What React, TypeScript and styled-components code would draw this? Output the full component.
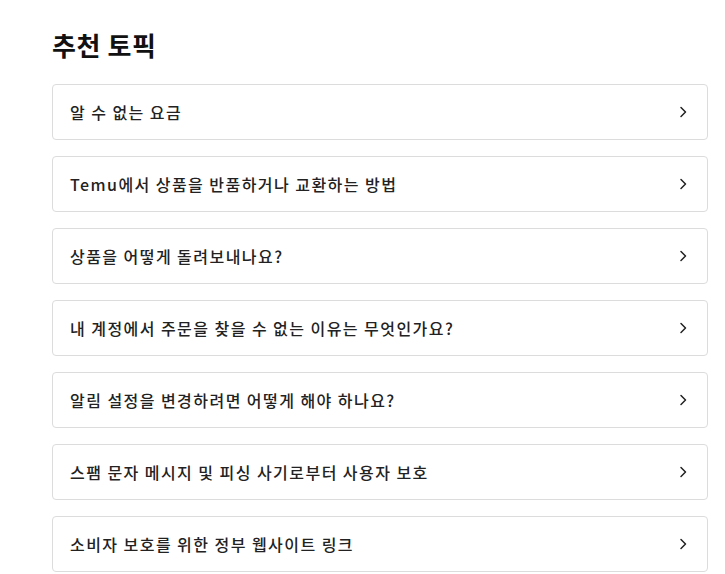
import React from "react";
import styled, { createGlobalStyle } from "styled-components";

const Global = createGlobalStyle`
  html, body { margin: 0; padding: 0; background: #fff; }
  body { font-family: "Noto Sans CJK KR", "Noto Sans", sans-serif; color: #222; }
`;

const Page = styled.div`
  padding: 26px 0 0 52px;
  width: 656px;
`;

const Title = styled.h2`
  margin: 0 0 20px;
  font-size: 26px;
  font-weight: 700;
  line-height: 38px;
  color: #111;
  letter-spacing: 0.6px;
`;

const List = styled.div`
  display: flex;
  flex-direction: column;
  gap: 16px;
`;

const Item = styled.div`
  box-sizing: border-box;
  height: 56px;
  border: 1px solid #dcdcdc;
  border-radius: 4px;
  display: flex;
  align-items: center;
  justify-content: space-between;
  padding: 0 18px 0 17px;
`;

const Label = styled.span`
  font-size: 16px;
  font-weight: 500;
  color: #222;
  letter-spacing: 1.45px;
`;

const Chevron = () => (
  <svg width="12" height="14" viewBox="0 0 12 14" fill="none">
    <path d="M4 2.5 L8.5 7 L4 11.5" stroke="#222" strokeWidth="1.5" strokeLinecap="round" strokeLinejoin="round" />
  </svg>
);

const topics = [
  "알 수 없는 요금",
  "Temu에서 상품을 반품하거나 교환하는 방법",
  "상품을 어떻게 돌려보내나요?",
  "내 계정에서 주문을 찾을 수 없는 이유는 무엇인가요?",
  "알림 설정을 변경하려면 어떻게 해야 하나요?",
  "스팸 문자 메시지 및 피싱 사기로부터 사용자 보호",
  "소비자 보호를 위한 정부 웹사이트 링크",
];

export default function App() {
  return (
    <>
      <Global />
      <Page>
        <Title>추천 토픽</Title>
        <List>
          {topics.map((t) => (
            <Item key={t}>
              <Label>{t}</Label>
              <Chevron />
            </Item>
          ))}
        </List>
      </Page>
    </>
  );
}
